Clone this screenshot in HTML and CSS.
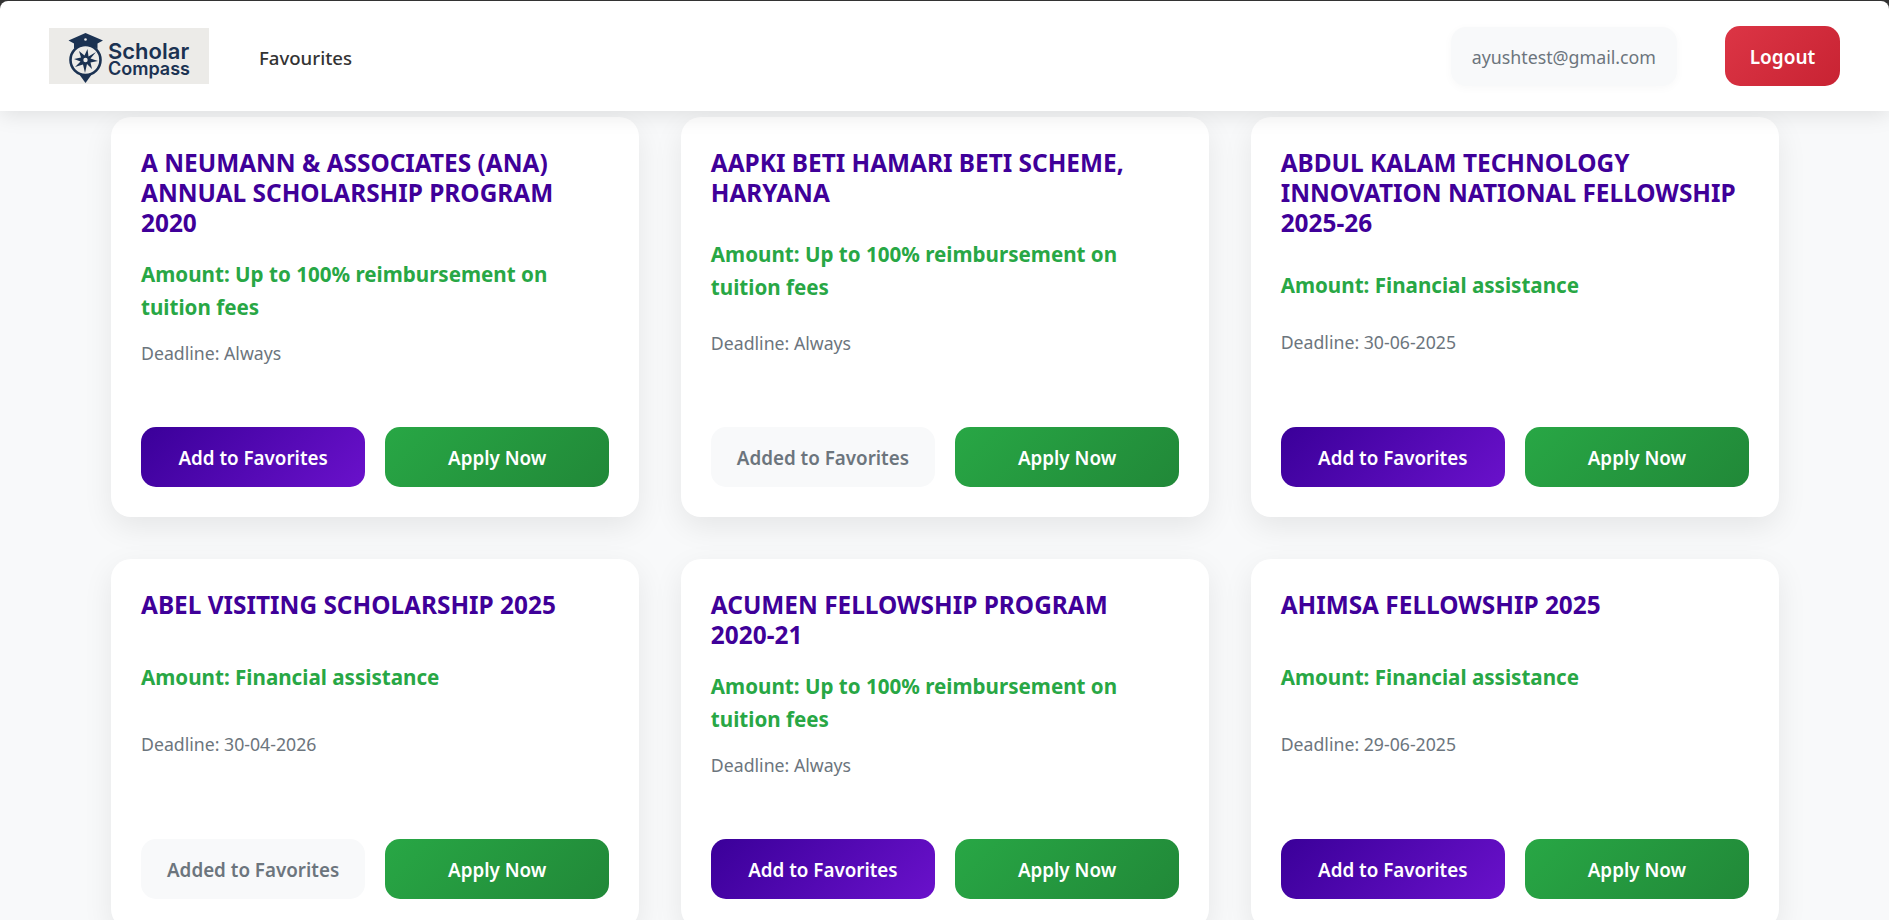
FILE: index.html
```html
<!DOCTYPE html>
<html lang="en">

<head>
    <meta charset="UTF-8">
    <meta name="viewport" content="width=device-width, initial-scale=1.0">
    <title>Scholar Compass</title>
    <link rel="stylesheet" href="styles.css">
</head>

<body>
    <header class="topbar">
        <nav class="navbar">
            <div class="nav-left">
                <a class="logo" href="#">
                    <svg class="logo-mark" viewBox="0 0 36 52" width="36" height="52" aria-hidden="true">
                        <path d="M17.500 1 L35 8.500 L29.500 11.500 L29.500 17 C25 13 10 13 6 17 L6 11.500 L0.500 8.500 Z" fill="#1b3252"/>
                        <circle cx="17.500" cy="7.500" r="1.300" fill="#ecebe8"/>
                        <circle cx="17.500" cy="28" r="15" fill="none" stroke="#1b3252" stroke-width="2.600"/>
                        <path d="M19.500 17 L20.500 24.500 L28 20 L22.500 26.500 L30 29 L22.500 30.500 L24 37 L19 32 L17 41 L15 32.500 L7 35 L12.500 29.500 L6 27 L13 25.500 L11 19 L16.500 23.500 Z" fill="#1b3252"/>
                        <circle cx="17.500" cy="28" r="2.200" fill="#ecebe8"/>
                        <path d="M11 42 L24 42 L17.500 51 Z" fill="#1b3252"/>
                    </svg>
                    <span class="logo-text">
                        <span class="logo-top">Scholar</span>
                        <span class="logo-bottom">Compass</span>
                    </span>
                </a>
                <a class="nav-link" href="#">Favourites</a>
            </div>
            <div class="nav-right">
                <span class="user-email">ayushtest@gmail.com</span>
                <button class="btn-logout">Logout</button>
            </div>
        </nav>
    </header>

    <main class="grid">
        <div class="card">
            <div class="card-body">
                <h3 class="title">A NEUMANN &amp; ASSOCIATES (ANA) ANNUAL SCHOLARSHIP PROGRAM 2020</h3>
                <p class="amount">Amount: Up to 100% reimbursement on tuition fees</p>
                <p class="deadline">Deadline: Always</p>
            </div>
            <div class="actions">
                <button class="btn btn-fav">Add to Favorites</button>
                <button class="btn btn-apply">Apply Now</button>
            </div>
        </div>
        <div class="card">
            <div class="card-body">
                <h3 class="title">AAPKI BETI HAMARI BETI SCHEME, HARYANA</h3>
                <p class="amount">Amount: Up to 100% reimbursement on tuition fees</p>
                <p class="deadline">Deadline: Always</p>
            </div>
            <div class="actions">
                <button class="btn btn-added">Added to Favorites</button>
                <button class="btn btn-apply">Apply Now</button>
            </div>
        </div>
        <div class="card">
            <div class="card-body">
                <h3 class="title">ABDUL KALAM TECHNOLOGY INNOVATION NATIONAL FELLOWSHIP 2025-26</h3>
                <p class="amount">Amount: Financial assistance</p>
                <p class="deadline">Deadline: 30-06-2025</p>
            </div>
            <div class="actions">
                <button class="btn btn-fav">Add to Favorites</button>
                <button class="btn btn-apply">Apply Now</button>
            </div>
        </div>
        <div class="card">
            <div class="card-body">
                <h3 class="title">ABEL VISITING SCHOLARSHIP 2025</h3>
                <p class="amount">Amount: Financial assistance</p>
                <p class="deadline">Deadline: 30-04-2026</p>
            </div>
            <div class="actions">
                <button class="btn btn-added">Added to Favorites</button>
                <button class="btn btn-apply">Apply Now</button>
            </div>
        </div>
        <div class="card">
            <div class="card-body">
                <h3 class="title">ACUMEN FELLOWSHIP PROGRAM <span class="nowrap">2020-21</span></h3>
                <p class="amount">Amount: Up to 100% reimbursement on tuition fees</p>
                <p class="deadline">Deadline: Always</p>
            </div>
            <div class="actions">
                <button class="btn btn-fav">Add to Favorites</button>
                <button class="btn btn-apply">Apply Now</button>
            </div>
        </div>
        <div class="card">
            <div class="card-body">
                <h3 class="title">AHIMSA FELLOWSHIP 2025</h3>
                <p class="amount">Amount: Financial assistance</p>
                <p class="deadline">Deadline: 29-06-2025</p>
            </div>
            <div class="actions">
                <button class="btn btn-fav">Add to Favorites</button>
                <button class="btn btn-apply">Apply Now</button>
            </div>
        </div>
    </main>
</body>

</html>
```

FILE: styles.css
```css
html,
body {
    margin: 0;
    padding: 0;
    height: 100%;
    overflow: hidden;
}

body {
    font-family: "Noto Sans", "Open Sans", Arial, sans-serif;
    background: #f8f9fa;
    color: #333;
}

.topbar {
    position: relative;
    z-index: 10;
    background: #333;
    padding-top: 1px;
    box-shadow: 0 4px 20px rgba(0, 0, 0, 0.1);
}

.navbar {
    height: 110px;
    box-sizing: border-box;
    padding: 0 49px;
    background: white;
    border-radius: 8px 8px 0 0;
    display: flex;
    justify-content: space-between;
    align-items: center;
}

.nav-left {
    display: flex;
    align-items: center;
    gap: 50px;
}

.nav-right {
    display: flex;
    align-items: center;
    gap: 48px;
}

.logo {
    width: 160px;
    height: 56px;
    box-sizing: border-box;
    padding: 3px 0 0 19px;
    background: #ecebe8;
    display: flex;
    align-items: center;
    gap: 4px;
    color: #1b3252;
    text-decoration: none;
}

.logo-text {
    display: flex;
    flex-direction: column;
    margin-top: 4px;
    font-family: "Inter", sans-serif;
    font-weight: 600;
    line-height: 18px;
}

.logo-top {
    font-size: 22px;
}

.logo-bottom {
    font-size: 18px;
}

.nav-link {
    margin-top: 2px;
    color: #333;
    font-size: 18.600px;
    font-weight: 500;
    text-decoration: none;
}

.user-email {
    padding: 18px 21px 16px;
    color: #6c757d;
    font-size: 17.800px;
    line-height: 25px;
    background: #f8f9fa;
    border-radius: 15px;
    box-shadow: 0 2px 10px rgba(0, 0, 0, 0.03);
}

.btn-logout {
    width: 115px;
    height: 60px;
    padding-top: 3px;
    border: none;
    border-radius: 15px;
    color: white;
    font-family: inherit;
    font-size: 19px;
    font-weight: 600;
    background: linear-gradient(135deg, #dc3545, #c82333);
}

.grid {
    display: grid;
    grid-template-columns: repeat(3, 1fr);
    gap: 42px 41.500px;
    padding: 6px 110px 0 111px;
}

.card {
    display: flex;
    flex-direction: column;
    padding: 30px;
    background: white;
    border-radius: 20px;
    box-shadow: 0 10px 30px rgba(0, 0, 0, 0.08);
}

.card-body {
    flex: 1;
    display: flex;
    flex-direction: column;
}

.title,
.amount,
.deadline {
    flex-grow: 1;
    margin: 0;
}

.title {
    padding-top: 1px;
    color: #3f0099;
    font-size: 24.400px;
    font-weight: 700;
    line-height: 30px;
    margin-bottom: 20px;
}

.nowrap {
    white-space: nowrap;
}

.amount {
    color: #28a745;
    font-size: 20.600px;
    font-weight: 700;
    line-height: 33px;
    margin-bottom: 15px;
}

.deadline {
    color: #6c757d;
    font-size: 17.700px;
    line-height: 28px;
}

.actions {
    display: flex;
    gap: 20px;
    margin-top: 60px;
}

.btn {
    flex: 1;
    height: 60px;
    padding-top: 3px;
    border: none;
    border-radius: 15px;
    font-family: inherit;
    font-size: 18.800px;
    font-weight: 600;
    color: white;
}

.btn-fav {
    background: linear-gradient(135deg, #3a0099, #6a11cb);
}

.btn-apply {
    background: linear-gradient(135deg, #28a745, #218838);
}

.btn-added {
    background: #f8f9fa;
    color: #6c757d;
}
```
